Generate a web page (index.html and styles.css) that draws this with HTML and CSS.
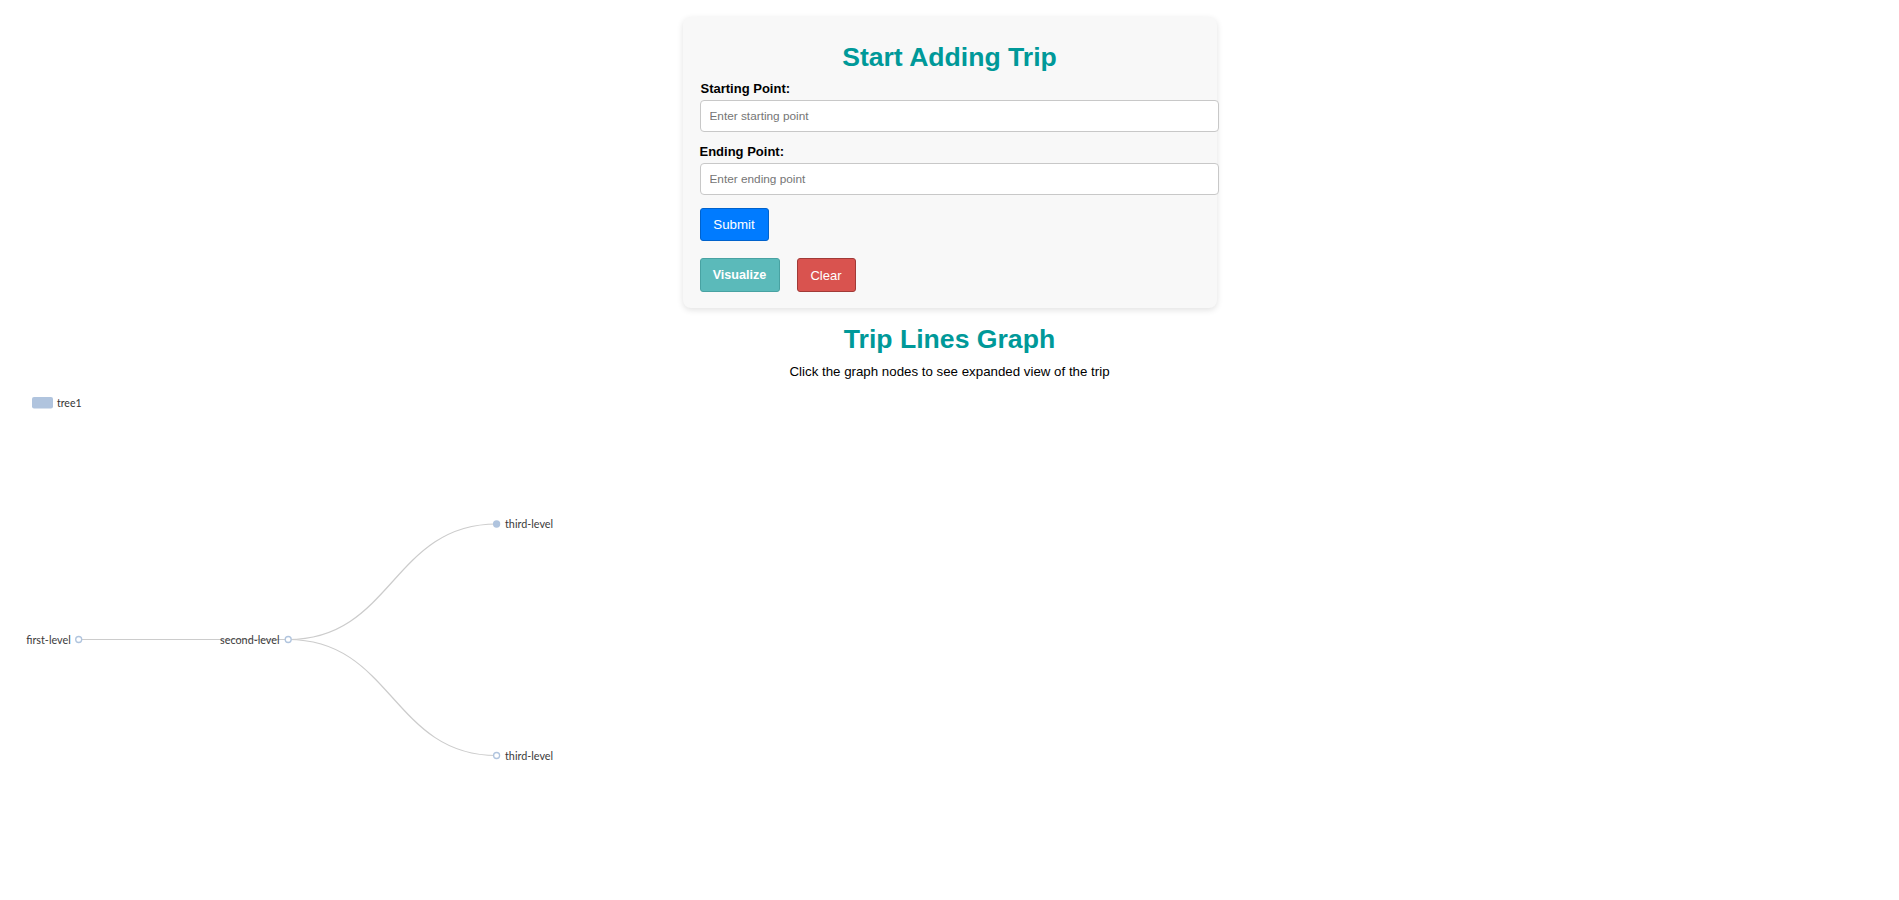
FILE: index.html
```html
<!DOCTYPE html>
<html lang="en">
<head>
<meta charset="utf-8">
<title>Trip Lines</title>
<link rel="stylesheet" href="styles.css">
</head>
<body>
<div class="card">
  <h2 class="card-title">Start Adding Trip</h2>
  <label class="field-label first" for="start">Starting Point:</label>
  <input class="field-input" id="start" type="text" placeholder="Enter starting point">
  <label class="field-label second" for="end">Ending Point:</label>
  <input class="field-input" id="end" type="text" placeholder="Enter ending point">
  <button class="btn btn-submit" type="button">Submit</button>
  <div class="btn-row">
    <button class="btn btn-visualize" type="button">Visualize</button>
    <button class="btn btn-clear" type="button">Clear</button>
  </div>
</div>

<h2 class="graph-title">Trip Lines Graph</h2>
<p class="graph-sub">Click the graph nodes to see expanded view of the trip</p>

<div class="chart">
  <svg class="chart-svg" width="1899" height="520" viewBox="0 0 1899 520">
    <rect x="32" y="17" width="21" height="11.5" rx="2" fill="#b0c4de"/>
    <text class="legend-text" x="57" y="22.5" dominant-baseline="central">tree1</text>

    <g fill="none" stroke="#cccccc" stroke-width="1.2">
      <path d="M78.7 259.5 L288.2 259.5"/>
      <path d="M288.2 259.5 C392.4 259.5 392.4 144 496.6 144"/>
      <path d="M288.2 259.5 C392.4 259.5 392.4 375.5 496.6 375.5"/>
    </g>

    <g stroke="#b0c4de" stroke-width="1.3">
      <circle cx="78.7" cy="259.5" r="3" fill="#ffffff"/>
      <circle cx="288.2" cy="259.5" r="3" fill="#ffffff"/>
      <circle cx="496.6" cy="144" r="3" fill="#b0c4de"/>
      <circle cx="496.6" cy="375.5" r="3" fill="#ffffff"/>
    </g>

    <g class="node-text">
      <text x="70.7" y="259" text-anchor="end" dominant-baseline="central">first-level</text>
      <text x="279.5" y="259" text-anchor="end" dominant-baseline="central">second-level</text>
      <text x="505" y="143.5" dominant-baseline="central">third-level</text>
      <text x="505" y="375" dominant-baseline="central">third-level</text>
    </g>
  </svg>
</div>
</body>
</html>
```

FILE: styles.css
```css
html, body {
  margin: 0;
  padding: 0;
  background: #ffffff;
}

body {
  font-family: "Liberation Sans", Arial, sans-serif;
  color: #000000;
}

.card {
  box-sizing: border-box;
  width: 534px;
  margin: 17px auto 0;
  padding: 25px 17px 16px;
  background: #f8f8f8;
  border-radius: 8px;
  box-shadow: 0 2px 6px rgba(0, 0, 0, 0.12);
}

.card-title {
  margin: 0 0 9px;
  font-size: 26.6px;
  line-height: 30px;
  font-weight: bold;
  color: #009999;
  text-align: center;
}

.field-label {
  display: block;
  font-size: 13px;
  line-height: 15px;
  font-weight: bold;
  margin-bottom: 4px;
}

.field-label.first {
  padding-left: 1px;
}

.field-label.second {
  margin-top: 12px;
}

.field-input {
  display: block;
  box-sizing: border-box;
  width: 519px;
  height: 32px;
  margin: 0;
  padding: 0 9px;
  border: 1px solid #c8c8c8;
  border-radius: 4px;
  background: #ffffff;
  font-family: "Liberation Sans", Arial, sans-serif;
  font-size: 11.8px;
  color: #333333;
  outline: none;
}

.field-input::placeholder {
  color: #757575;
}

.btn {
  box-sizing: border-box;
  height: 33px;
  margin: 0;
  padding: 0;
  border-radius: 3px;
  color: #ffffff;
  font-family: "Liberation Sans", Arial, sans-serif;
  cursor: pointer;
}

.btn-submit {
  display: block;
  width: 69px;
  margin-top: 13px;
  background: #007bff;
  border: 1px solid #0062cc;
  font-size: 13.3px;
}

.btn-row {
  display: flex;
  gap: 17px;
  margin-top: 17px;
}

.btn-visualize {
  width: 80px;
  height: 34px;
  background: #5bbaba;
  border: 1px solid #48a2a2;
  font-size: 12.6px;
  font-weight: bold;
}

.btn-clear {
  width: 59px;
  height: 34px;
  background: #d9534f;
  border: 1px solid #a13a37;
  font-size: 13px;
}

.graph-title {
  margin: 16px 0 0;
  font-size: 26.6px;
  line-height: 30px;
  font-weight: bold;
  color: #009999;
  text-align: center;
}

.graph-sub {
  margin: 10px 0 0;
  font-size: 13.3px;
  line-height: 16px;
  text-align: center;
}

.chart {
  margin-top: 0;
  width: 100%;
  height: 520px;
  overflow: hidden;
}

.chart-svg {
  display: block;
}

.legend-text {
  font-family: Lato, "Open Sans", sans-serif;
  font-size: 10.5px;
  fill: #333333;
}

.node-text text {
  font-family: Lato, "Open Sans", sans-serif;
  font-size: 10.8px;
  fill: #3a3a3a;
}
```
